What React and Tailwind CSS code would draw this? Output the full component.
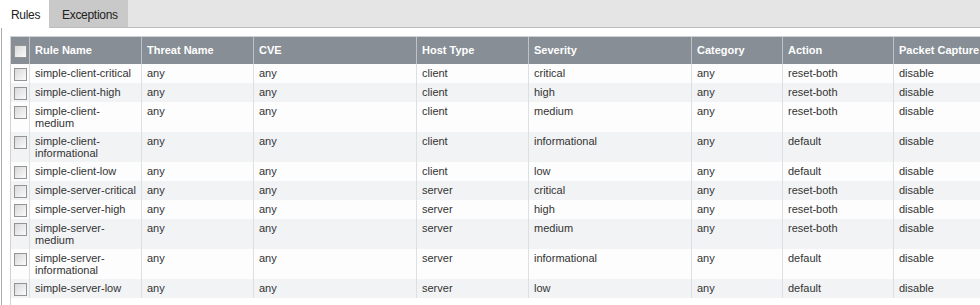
import React from "react";

const COLS = "grid grid-cols-[18px_112px_112px_163px_112px_163px_91px_111px_140px]";

const columns = [
  "Rule Name",
  "Threat Name",
  "CVE",
  "Host Type",
  "Severity",
  "Category",
  "Action",
  "Packet Capture",
];

const rules = [
  { name: "simple-client-critical", host: "client", severity: "critical", action: "reset-both" },
  { name: "simple-client-high", host: "client", severity: "high", action: "reset-both" },
  { name: "simple-client-\nmedium", host: "client", severity: "medium", action: "reset-both" },
  { name: "simple-client-\ninformational", host: "client", severity: "informational", action: "default" },
  { name: "simple-client-low", host: "client", severity: "low", action: "default" },
  { name: "simple-server-critical", host: "server", severity: "critical", action: "reset-both" },
  { name: "simple-server-high", host: "server", severity: "high", action: "reset-both" },
  { name: "simple-server-\nmedium", host: "server", severity: "medium", action: "reset-both" },
  { name: "simple-server-\ninformational", host: "server", severity: "informational", action: "default" },
  { name: "simple-server-low", host: "server", severity: "low", action: "default" },
];

const Checkbox = ({ className = "" }) => (
  <div
    className={`w-[13px] h-[13px] border border-[#949494] bg-linear-to-br from-[#d9d9d9] to-[#fbfbfb] ${className}`}
  />
);

const Cell = ({ children }) => (
  <div className="border-l border-[#dde0e3] pl-[5px] pt-[3px] pb-[3px] min-h-[19px] leading-[12px] whitespace-pre-line overflow-hidden">
    {children}
  </div>
);

export default function App() {
  return (
    <div className="w-[980px] h-[305px] bg-white overflow-hidden flex flex-col font-['Liberation_Sans',Arial,sans-serif]">
      {/* tabs */}
      <div className="flex h-[28px] shrink-0">
        <div className="w-[50px] bg-white border-r border-[#c6c6c6] pl-[11px] pt-[6px] text-[12px] tracking-[-0.3px] text-[#222]">
          Rules
        </div>
        <div className="w-[78px] bg-[#c9c9c9] border-b border-[#bdbdbd] pl-[12px] pt-[6px] text-[12px] tracking-[-0.3px] text-[#222]">
          Exceptions
        </div>
        <div className="flex-1 bg-[#e5e5e5] border-b border-[#bdbdbd]" />
      </div>

      {/* panel */}
      <div className="flex-1 ml-px border-l border-[#acacac] pl-[8px] pt-[8px] flex">
        <div className="flex-1 border-l border-[#d3d3d3] text-[11px] text-[#333]">
          {/* header */}
          <div className={`${COLS} h-[28px] border-t border-[#cdd0d4] bg-[#878e95] text-white font-bold`}>
            <div className="pl-[3px] pt-[8px]">
              <Checkbox />
            </div>
            {columns.map((c) => (
              <div key={c} className="border-l border-[#bfc3c8] pl-[5px] flex items-center whitespace-nowrap">
                {c}
              </div>
            ))}
          </div>

          {/* rows */}
          {rules.map((r, i) => (
            <div key={i} className={`${COLS} ${i % 2 === 0 ? "bg-[#fdfdfd]" : "bg-[#f2f3f5]"}`}>
              <div className="pl-[3px] pt-[4px]">
                <Checkbox />
              </div>
              <Cell>{r.name}</Cell>
              <Cell>any</Cell>
              <Cell>any</Cell>
              <Cell>{r.host}</Cell>
              <Cell>{r.severity}</Cell>
              <Cell>any</Cell>
              <Cell>{r.action}</Cell>
              <Cell>disable</Cell>
            </div>
          ))}
        </div>
      </div>
    </div>
  );
}
